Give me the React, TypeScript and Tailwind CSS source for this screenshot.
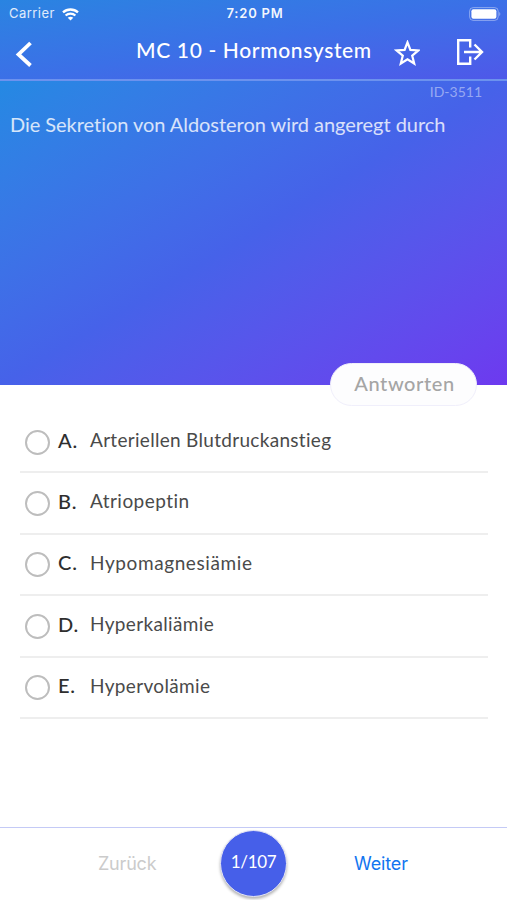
import React, { useState } from 'react';

interface Answer {
  key: string;
  text: string;
  spacing: string;
}

const answers: Answer[] = [
  { key: 'A', text: 'Arteriellen Blutdruckanstieg', spacing: 'tracking-[0.3px]' },
  { key: 'B', text: 'Atriopeptin', spacing: 'tracking-[0.45px]' },
  { key: 'C', text: 'Hypomagnesiämie', spacing: 'tracking-[0.6px]' },
  { key: 'D', text: 'Hyperkaliämie', spacing: 'tracking-[0.35px]' },
  { key: 'E', text: 'Hypervolämie', spacing: 'tracking-[0.35px]' },
];

const StatusBar = () => (
  <div className="flex h-7 items-center pl-[9px] pr-[6px] font-['Inter',sans-serif] text-[13px]">
    <div className="flex flex-1 items-center gap-[7px]">
      <span className="tracking-[0.45px] text-white/85">Carrier</span>
      <svg width="17" height="13" viewBox="0 0 17 13" fill="none" stroke="white" strokeWidth="2.3">
        <path d="M1 4.4C5.2.5 11.8.5 16 4.4" />
        <path d="M3.6 7.5c2.8-2.5 7-2.5 9.800 0" />
        <path d="M5.7 9.700c1.700-1.400 3.900-1.400 5.600 0l-2.800 2.800z" fill="white" stroke="none" />
      </svg>
    </div>
    <span className="font-semibold tracking-[0.8px] text-white/95">7:20 PM</span>
    <div className="flex flex-1 justify-end">
      <svg width="32" height="14" viewBox="0 0 32 14">
        <rect x="0.6" y="0.6" width="28.6" height="12.8" rx="3.6" fill="none" stroke="white" strokeOpacity="0.4" />
        <rect x="2.4" y="2.2" width="25" height="9.6" rx="2" fill="white" />
        <path d="M30.2 5v4c1.500-.5 1.500-3.500 0-4z" fill="white" fillOpacity="0.4" />
      </svg>
    </div>
  </div>
);

export default function App() {
  const [selected, setSelected] = useState<string | null>(null);
  const [starred, setStarred] = useState(false);

  return (
    <div className="flex h-[900px] w-[507px] flex-col overflow-hidden bg-white font-['Lato',sans-serif]">
      <header className="h-[81px] shrink-0 border-b-2 border-[#6c92ee] bg-linear-to-br from-[#2984e1] via-[#3b70e7] to-[#4e58e9] text-white">
        <StatusBar />
        <div className="flex h-[50px] items-center pl-[15px] pr-[23px]">
          <button type="button">
            <svg width="18" height="28" viewBox="0 0 18 28" fill="none" stroke="white" strokeWidth="3.8">
              <path d="M15.500 4L3.500 15.500l12 11" />
            </svg>
          </button>
          <h1 className="ml-[103px] w-[236px] whitespace-nowrap pb-[6px] text-[21px] font-medium tracking-[0.65px]">
            MC 10 - Hormonsystem
          </h1>
          <button type="button" className="ml-[22px]" onClick={() => setStarred(!starred)}>
            <svg width="26" height="26" viewBox="0 0 26 26" fill={starred ? 'white' : 'none'} stroke="white" strokeWidth="2.2">
              <path d="M13.500 2.300l2.900 7.600 8 .5-6.200 5.200 2 7.900-6.700-4.300-6.700 4.300 2-7.900-6.200-5.200 8-.5z" />
            </svg>
          </button>
          <button type="button" className="ml-auto pb-[2px]">
            <svg width="28" height="28" viewBox="0 0 28 28" fill="none" stroke="white" strokeWidth="2.4">
              <path d="M14.200 9.500V2.200H2.200v23.600h12V18.500" />
              <path d="M8 14H26M18.500 6.500L26 14l-7.500 7.500" />
            </svg>
          </button>
        </div>
      </header>

      <section className="flex h-[304px] shrink-0 flex-col bg-linear-to-br from-[#2489e3] via-[#4662e9] to-[#6d39ef]">
        <span className="mr-[25px] mt-px self-end text-[14px] leading-5 text-white/45">ID-3511</span>
        <p className="ml-[10px] mt-[8px] whitespace-nowrap text-[20px] leading-7 tracking-[-0.04px] text-white/80">
          Die Sekretion von Aldosteron wird angeregt durch
        </p>
      </section>

      <main className="flex-1 px-5">
        <div className="flex h-[27px] justify-end pr-[10px]">
          <button
            type="button"
            className="-mt-[22px] h-[43px] w-[147px] rounded-full border border-[#f0effb] bg-[#fdfdfe] pb-[3px] pl-[2px] text-[20px] font-medium tracking-[0.6px] text-[#a5a5a5]"
          >
            Antworten
          </button>
        </div>
        <ul className="-mr-px">
          {answers.map((answer) => (
            <li
              key={answer.key}
              className="flex h-[61.400px] items-center border-b-2 border-[#eeeeee] pl-[5px]"
              onClick={() => setSelected(answer.key)}
            >
              <span
                className={`mt-px h-[25px] w-[25px] rounded-full border-2 border-[#bdbdbd] ${selected === answer.key ? 'bg-[#465fe9]' : ''}`}
              />
              <span className="ml-[8px] w-[32px] pb-[4px] text-[20px] font-medium tracking-[0.8px] text-[#2e2e2e]">
                {answer.key}.
              </span>
              <span className={`whitespace-nowrap pb-[3px] text-[19px] text-[#4a4a4a] ${answer.spacing}`}>{answer.text}</span>
            </li>
          ))}
        </ul>
      </main>

      <footer className="flex h-[73px] shrink-0 items-start border-t border-[#c4caf6] font-['Inter',sans-serif] text-[18px]">
        <button type="button" className="ml-[98px] mt-[22px] w-[60px] text-left tracking-[-0.2px] text-[#cbcbcb]">
          Zurück
        </button>
        <div className="ml-[62px] mt-[2px] flex h-[67px] w-[67px] items-center justify-center rounded-full border border-[#e4e5f5] bg-[#465fe9] pb-[3px] font-['Lato',sans-serif] text-[17px] tracking-[-0.3px] text-white shadow-[0_2px_3px_rgba(0,0,0,0.3)]">
          1/107
        </div>
        <button type="button" className="ml-[67px] mt-[22px] tracking-[-0.15px] text-[#1275f0]">
          Weiter
        </button>
      </footer>
    </div>
  );
}
